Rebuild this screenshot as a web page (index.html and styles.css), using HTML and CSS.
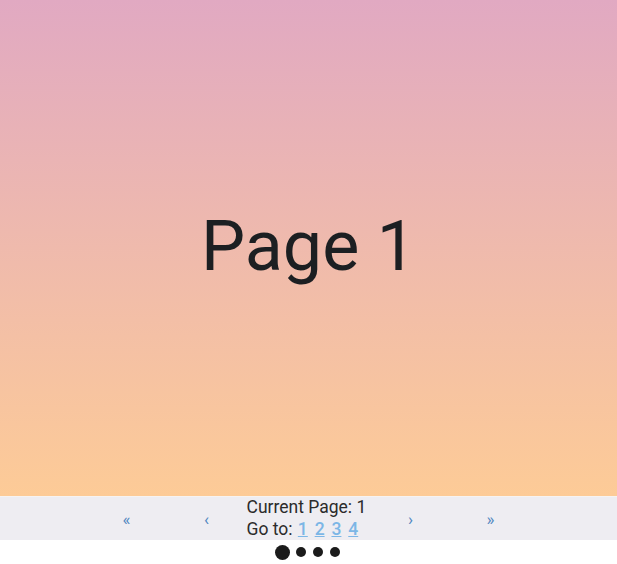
FILE: index.html
```html
<!DOCTYPE html>
<html>
<head>
<meta charset="utf-8">
<link rel="stylesheet" href="styles.css">
</head>
<body>
<div class="app">
  <main class="slide">
    <h1 class="slide-title">Page 1</h1>
  </main>
  <nav class="pager">
    <a class="pager-btn" href="#">&laquo;</a>
    <a class="pager-btn" href="#">&lsaquo;</a>
    <div class="pager-info">
      <div>Current Page: 1</div>
      <div><span class="goto-label">Go to:</span> <a class="goto" href="#">1</a> <a class="goto" href="#">2</a> <a class="goto" href="#">3</a> <a class="goto" href="#">4</a></div>
    </div>
    <a class="pager-btn" href="#">&rsaquo;</a>
    <a class="pager-btn" href="#">&raquo;</a>
  </nav>
  <div class="dots">
    <span class="dot active"></span>
    <span class="dot"></span>
    <span class="dot"></span>
    <span class="dot"></span>
  </div>
</div>
</body>
</html>
```

FILE: styles.css
```css
* { box-sizing: border-box; }
html, body { margin: 0; padding: 0; }
body {
  font-family: Roboto, "Liberation Sans", sans-serif;
  background: #ffffff;
  color: #212529;
}
.app {
  width: 617px;
  height: 564px;
  display: flex;
  flex-direction: column;
}
.slide {
  height: 496px;
  background: linear-gradient(to bottom, #e1a9c2 0%, #fdcb97 100%);
  display: flex;
  align-items: center;
  justify-content: center;
}
.slide-title {
  margin: 0 0 4px 0;
  font-weight: 400;
  font-size: 70px;
  line-height: 1;
  color: #1c1f22;
}
.pager {
  height: 44px;
  background: #eeedf2;
  border-top: 1px solid #f6f3f2;
  display: flex;
  justify-content: center;
  align-items: center;
}
.pager-btn {
  width: 80px;
  text-align: center;
  text-decoration: none;
  color: #4f86c0;
  font-size: 17px;
  padding-top: 1px;
}
.pager-info {
  width: 124px;
  white-space: nowrap;
  font-size: 17.5px;
  line-height: 22px;
  color: #2b2b2b;
  margin-top: -1px;
}
.goto-label {
  margin-right: 1px;
}
.goto {
  color: #7cb6e6;
  font-weight: 500;
  text-decoration: underline;
  margin-right: 2.5px;
}
.dots {
  flex: 1;
  display: flex;
  justify-content: center;
  align-items: center;
  gap: 7px;
  padding-right: 3px;
}
.dot {
  width: 10px;
  height: 10px;
  border-radius: 50%;
  background: #1b1b1b;
}
.dot.active {
  width: 15px;
  height: 15px;
  margin-right: -1px;
}
```
